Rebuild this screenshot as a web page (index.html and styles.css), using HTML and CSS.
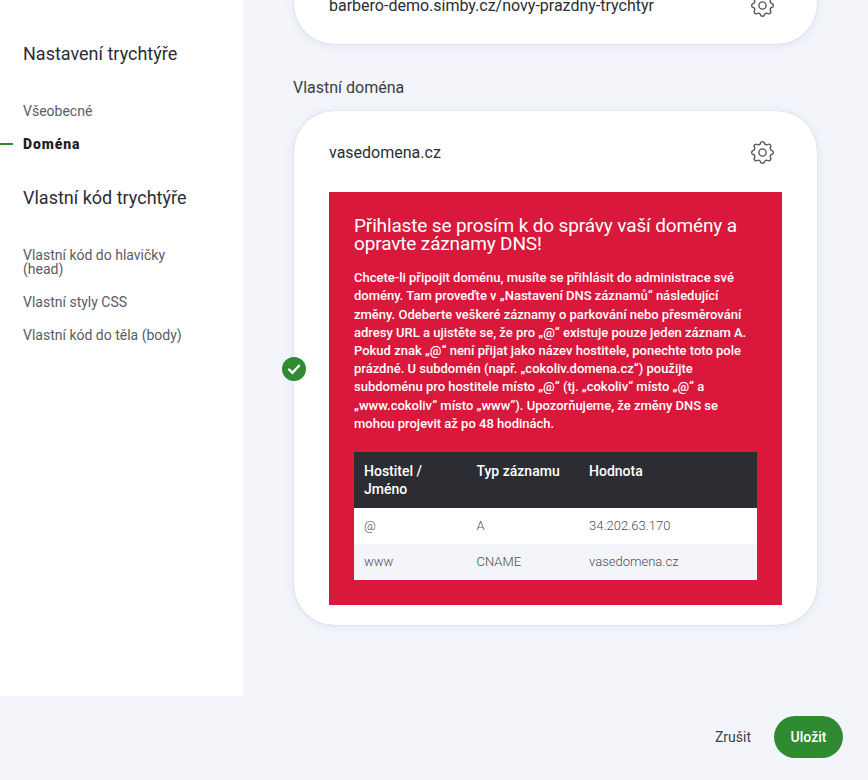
FILE: index.html
```html
<!doctype html>
<html lang="cs">
  <head>
    <meta charset="utf-8">
    <title>Nastavení trychtýře</title>
    <link rel="stylesheet" href="styles.css">
  </head>
  <body>
    <div id="layout">
      <aside id="sidebar">
        <h2 class="nav-title">Nastavení trychtýře</h2>
        <ul class="nav-list">
          <li><a href="#">Všeobecné</a></li>
          <li class="active"><a href="#">Doména</a></li>
        </ul>
        <h2 class="nav-title">Vlastní kód trychtýře</h2>
        <ul class="nav-list">
          <li><a href="#">Vlastní kód do hlavičky (head)</a></li>
          <li><a href="#">Vlastní styly CSS</a></li>
          <li><a href="#">Vlastní kód do těla (body)</a></li>
        </ul>
      </aside>

      <main id="content">
        <section class="card card-short">
          <div class="card-row">
            <span>barbero-demo.simby.cz/novy-prazdny-trychtyr</span>
            <svg class="gear" viewBox="0 0 24 24"><path d="M10.325 4.317c.426-1.756 2.924-1.756 3.35 0a1.724 1.724 0 002.573 1.066c1.543-.94 3.31.826 2.37 2.37a1.724 1.724 0 001.065 2.572c1.756.426 1.756 2.924 0 3.35a1.724 1.724 0 00-1.066 2.573c.94 1.543-.826 3.31-2.37 2.37a1.724 1.724 0 00-2.572 1.065c-.426 1.756-2.924 1.756-3.35 0a1.724 1.724 0 00-2.573-1.066c-1.543.94-3.31-.826-2.37-2.37a1.724 1.724 0 00-1.065-2.572c-1.756-.426-1.756-2.924 0-3.35a1.724 1.724 0 001.066-2.573c-.94-1.543.826-3.31 2.37-2.37.996.608 2.296.07 2.572-1.065z"/><circle cx="12" cy="12" r="3"/></svg>
          </div>
        </section>

        <h3 class="section-label">Vlastní doména</h3>

        <section class="card">
          <span class="status-badge">
            <svg viewBox="0 0 24 24"><path d="M7 12.5l3.4 3.2 6.6-7"/></svg>
          </span>
          <div class="card-row">
            <span>vasedomena.cz</span>
            <svg class="gear" viewBox="0 0 24 24"><path d="M10.325 4.317c.426-1.756 2.924-1.756 3.35 0a1.724 1.724 0 002.573 1.066c1.543-.94 3.31.826 2.37 2.37a1.724 1.724 0 001.065 2.572c1.756.426 1.756 2.924 0 3.35a1.724 1.724 0 00-1.066 2.573c.94 1.543-.826 3.31-2.37 2.37a1.724 1.724 0 00-2.572 1.065c-.426 1.756-2.924 1.756-3.35 0a1.724 1.724 0 00-2.573-1.066c-1.543.94-3.31-.826-2.37-2.37a1.724 1.724 0 00-1.065-2.572c-1.756-.426-1.756-2.924 0-3.35a1.724 1.724 0 001.066-2.573c-.94-1.543.826-3.31 2.37-2.37.996.608 2.296.07 2.572-1.065z"/><circle cx="12" cy="12" r="3"/></svg>
          </div>

          <div class="alert">
            <h4>Přihlaste se prosím k do správy vaší domény a opravte záznamy DNS!</h4>
            <p>Chcete-li připojit doménu, musíte se přihlásit do administrace své domény. Tam proveďte v „Nastavení DNS záznamů“ následující změny. Odeberte veškeré záznamy o parkování nebo přesměrování adresy URL a ujistěte se, že pro „@“ existuje pouze jeden záznam A. Pokud znak „@“ není přijat jako název hostitele, ponechte toto pole prázdné. U subdomén (např. „cokoliv.domena.cz“) použijte subdoménu pro hostitele místo „@“ (tj. „cokoliv“ místo „@“ a „www.cokoliv“ místo „www“). Upozorňujeme, že změny DNS se mohou projevit až po 48 hodinách.</p>
            <table class="dns-table">
              <thead>
                <tr><th>Hostitel / Jméno</th><th>Typ záznamu</th><th>Hodnota</th></tr>
              </thead>
              <tbody>
                <tr><td>@</td><td>A</td><td>34.202.63.170</td></tr>
                <tr><td>www</td><td>CNAME</td><td>vasedomena.cz</td></tr>
              </tbody>
            </table>
          </div>
        </section>
      </main>
    </div>

    <footer id="actions">
      <button class="btn-cancel">Zrušit</button>
      <button class="btn-save">Uložit</button>
    </footer>
  </body>
</html>
```

FILE: styles.css
```css
* {
  box-sizing: border-box;
}

html, body {
  height: 100%;
  margin: 0;
  overflow: hidden;
}

body {
  background: #f3f5fa;
  color: #2b2d33;
  display: flex;
  flex-direction: column;
  font-family: Roboto, "Liberation Sans", sans-serif;
}

#layout {
  display: flex;
  flex: 0 0 696px;
  min-height: 0;
}

#sidebar {
  background: #fff;
  flex: 0 0 243px;
  padding: 43px 40px 0 23px;
}

.nav-title {
  font-size: 18px;
  font-weight: 400;
  line-height: 22px;
  margin: 0;
}

.nav-list {
  list-style: none;
  margin: 0 0 36px;
  padding: 39px 0 0;
}

.nav-list li {
  font-size: 14px;
  line-height: 14px;
  margin-bottom: 19px;
  position: relative;
}

.nav-list a {
  color: #5a5c63;
  text-decoration: none;
}

.nav-list .active {
  margin-bottom: 0;
}

.nav-list .active a {
  color: #1d1f26;
  font-weight: 900;
  letter-spacing: 0.9px;
}

.nav-list .active:before {
  background: #2f8a32;
  content: "";
  height: 2px;
  left: -23px;
  position: absolute;
  top: 6px;
  width: 13px;
}

#content {
  display: flex;
  flex: 1 1 auto;
  flex-direction: column;
  justify-content: flex-end;
  overflow: hidden;
  padding: 0 51px 71px 51px;
}

.card {
  background: #fff;
  border-radius: 40px;
  box-shadow: 0 0 1px rgba(80, 90, 160, 0.35), 0 1px 10px rgba(80, 90, 160, 0.12);
  flex: 0 0 auto;
  padding: 24px 35px 20px;
  position: relative;
}

.card-short {
  height: 80px;
  margin-bottom: 34px;
}

.card-row {
  align-items: center;
  display: flex;
  font-size: 16px;
  height: 34px;
  justify-content: space-between;
  margin-right: 5.5px;
}

.gear {
  fill: none;
  height: 29px;
  stroke: #55575e;
  stroke-width: 1.15;
  width: 29px;
}

.section-label {
  color: #3b3d44;
  font-size: 16px;
  font-weight: 400;
  line-height: 20px;
  margin: 0 0 13px -1px;
}

.status-badge {
  background: #2f8a32;
  border-radius: 50%;
  height: 24px;
  left: -12px;
  position: absolute;
  top: 246px;
  width: 24px;
}

.status-badge svg {
  display: block;
  fill: none;
  stroke: #fff;
  stroke-linecap: round;
  stroke-width: 2.4;
}

.alert {
  background: #d9183b;
  color: #fff;
  margin-top: 23px;
  padding: 25px;
}

.alert h4 {
  font-size: 19px;
  font-weight: 400;
  letter-spacing: -0.14px;
  line-height: 18px;
  margin: 0 0 16px;
}

.alert p {
  font-size: 13px;
  font-weight: 500;
  line-height: 18.2px;
  margin: 0 0 19px;
}

.dns-table {
  border-collapse: collapse;
  table-layout: fixed;
  width: 100%;
}

.dns-table th {
  background: #2b2d33;
  font-size: 14px;
  font-weight: 500;
  line-height: 18px;
  padding: 10px;
  text-align: left;
  vertical-align: top;
}

.dns-table th:nth-child(1), .dns-table th:nth-child(2) {
  width: 112.5px;
}

.dns-table td {
  background: #fff;
  color: #4c4e55;
  font-size: 13px;
  font-weight: 300;
  height: 36px;
  padding: 0 10px 2px;
}

.dns-table tr:nth-child(2) td {
  background: #f3f5fa;
}

#actions {
  align-items: center;
  display: flex;
  flex: 1 1 auto;
  gap: 23px;
  justify-content: flex-end;
  padding: 0 25px 2px 0;
}

#actions button {
  border: 0;
  cursor: pointer;
  font-family: inherit;
  font-size: 14px;
  font-weight: 500;
}

#actions .btn-cancel {
  background: transparent;
  color: #3b3d44;
  font-weight: 400;
  padding: 0;
}

.btn-save {
  background: #2f8a32;
  border-radius: 21px;
  color: #fff;
  height: 42px;
  width: 69px;
}
```
